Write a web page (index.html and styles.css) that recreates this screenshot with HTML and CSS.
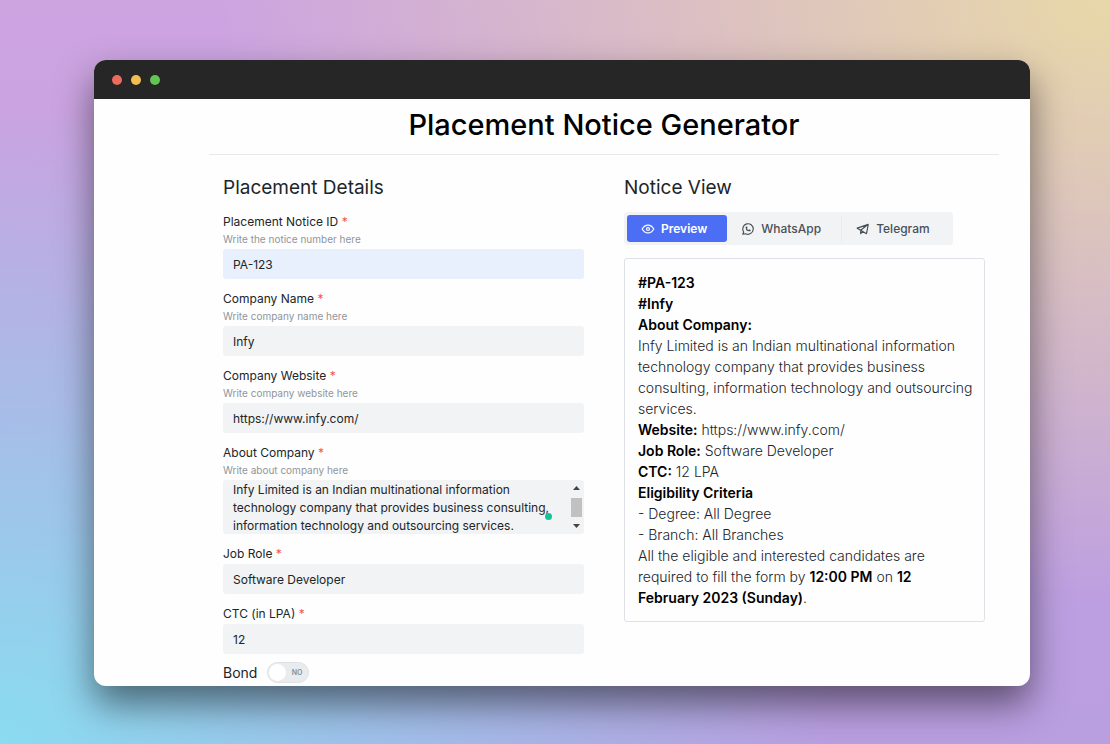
FILE: index.html
```html
<!DOCTYPE html>
<html lang="en">
<head>
<meta charset="utf-8">
<meta name="viewport" content="width=device-width, initial-scale=1">
<title>Placement Notice Generator</title>
<link rel="stylesheet" href="styles.css">
</head>
<body>
<div class="window">
  <div class="titlebar" aria-hidden="true">
    <span class="dot dot-close"></span>
    <span class="dot dot-minimize"></span>
    <span class="dot dot-zoom"></span>
  </div>
  <main class="page">
    <h1 class="page-title">Placement Notice Generator</h1>
    <div class="columns">
      <form class="details">
        <h2 class="section-title">Placement Details</h2>
        <div class="field">
          <label class="label" for="notice-id">Placement Notice ID <span class="required">*</span></label>
          <p class="hint">Write the notice number here</p>
          <input class="input input-filled" id="notice-id" type="text" value="PA-123">
        </div>
        <div class="field">
          <label class="label" for="company-name">Company Name <span class="required">*</span></label>
          <p class="hint">Write company name here</p>
          <input class="input" id="company-name" type="text" value="Infy">
        </div>
        <div class="field">
          <label class="label" for="website">Company Website <span class="required">*</span></label>
          <p class="hint">Write company website here</p>
          <input class="input" id="website" type="text" value="https://www.infy.com/">
        </div>
        <div class="field">
          <label class="label" for="about">About Company <span class="required">*</span></label>
          <p class="hint">Write about company here</p>
          <div class="textarea-wrap">
            <textarea class="input textarea" id="about">Infy Limited is an Indian multinational information technology company that provides business consulting, information technology and outsourcing services.</textarea>
            <span class="status-dot"></span>
            <div class="scrollbar" aria-hidden="true">
              <svg width="7" height="4" viewBox="0 0 7 4"><path d="M3.500 0L7 4H0z" fill="#444"/></svg>
              <span class="thumb"></span>
              <svg width="7" height="4" viewBox="0 0 7 4"><path d="M3.500 4L0 0h7z" fill="#444"/></svg>
            </div>
          </div>
        </div>
        <div class="field">
          <label class="label" for="role">Job Role <span class="required">*</span></label>
          <input class="input" id="role" type="text" value="Software Developer">
        </div>
        <div class="field">
          <label class="label" for="ctc">CTC (in LPA) <span class="required">*</span></label>
          <input class="input" id="ctc" type="text" value="12">
        </div>
        <div class="bond">
          <label for="bond">Bond</label>
          <span class="switch">
            <input class="switch-input" id="bond" type="checkbox" role="switch">
            <span class="switch-text">NO</span>
          </span>
        </div>
      </form>
      <section class="notice">
        <h2 class="section-title">Notice View</h2>
        <div class="tabs" role="tablist">
          <button class="tab tab-active" type="button" role="tab" aria-selected="true">
            <svg class="icon" viewBox="0 0 24 24"><path d="M2 12c5-9 15-9 20 0c-5 9-15 9-20 0z"/><circle cx="12" cy="12" r="2.500"/></svg>
            Preview
          </button>
          <button class="tab" type="button" role="tab" aria-selected="false">
            <svg class="icon" viewBox="0 0 24 24"><path d="M3 21l1.650-3.800a9 9 0 1 1 3.400 2.900z"/><path d="M9 10a.5.5 0 0 0 1 0V9a.5.5 0 0 0-1 0v1a5 5 0 0 0 5 5h1a.5.5 0 0 0 0-1h-1a.5.5 0 0 0 0 1"/></svg>
            WhatsApp
          </button>
          <button class="tab" type="button" role="tab" aria-selected="false">
            <svg class="icon" viewBox="0 0 24 24"><path d="M21 4L2 10.500l6 3.500M21 4l-3 16-10-6M21 4L8 14v6l4-4"/></svg>
            Telegram
          </button>
        </div>
        <article class="card">
          <strong>#PA-123</strong><br>
          <strong>#Infy</strong><br>
          <strong>About Company:</strong><br>
          Infy Limited is an Indian multinational information technology company that provides business consulting, information technology and outsourcing services.<br>
          <strong>Website:</strong> https://www.infy.com/<br>
          <strong>Job Role:</strong> Software Developer<br>
          <strong>CTC:</strong> 12 LPA<br>
          <strong>Eligibility Criteria</strong><br>
          - Degree: All Degree<br>
          - Branch: All Branches<br>
          All the eligible and interested candidates are required to fill the form by <strong>12:00 PM</strong> on <strong>12 February 2023 (Sunday)</strong>.
        </article>
      </section>
    </div>
  </main>
</div>
</body>
</html>
```
FILE: styles.css
```css
* {
  box-sizing: border-box;
}

body {
  display: flex;
  min-height: 100vh;
  margin: 0;
  padding: 60px 80px 58px 94px;
  font-family: Inter, "Liberation Sans", sans-serif;
  color: #212529;
  background:
    radial-gradient(ellipse 75% 85% at 0 100%, #8adcf0 0, #8adcf000 100%),
    radial-gradient(ellipse 80% 80% at 100% 0, #e8d8a8 0, #e8d8a800 100%),
    linear-gradient(#cda4e0, #b99ee0);
}

.window {
  display: flex;
  flex: 1;
  flex-direction: column;
  min-width: 0;
  overflow: hidden;
  background: #fefefe;
  border-radius: 12px;
  box-shadow: 0 18px 36px rgb(0 0 0 / 50%);
}

.titlebar {
  display: flex;
  gap: 9px;
  align-items: center;
  height: 39px;
  padding-left: 18px;
  background: #262626;
}

.dot {
  width: 10px;
  height: 10px;
  border-radius: 50%;
}

.dot-close {
  background: #ed6a5e;
}

.dot-minimize {
  background: #f5bd4f;
}

.dot-zoom {
  background: #61c454;
}

.page {
  flex: 1;
  padding: 0 31px 0 115px;
}

.page-title {
  margin: 0;
  padding: 5px 0 9px;
  border-bottom: 1px solid #e6e8ea;
  font-size: 29px;
  font-weight: 500;
  line-height: 41px;
  text-align: center;
  color: #000;
}

.columns {
  display: grid;
  grid-template-columns: 1fr 1fr;
  gap: 40px;
  padding: 19px 14px 0;
}

.section-title {
  margin: 0 0 10px;
  font-size: 19px;
  font-weight: 400;
  line-height: 28px;
}

.field {
  margin-bottom: 10px;
}

.label {
  display: block;
  font-size: 12px;
  line-height: 20px;
}

.required {
  color: #fa5252;
}

.hint {
  margin: 0 0 3px;
  font-size: 10px;
  line-height: 14px;
  color: #909599;
}

.input {
  display: block;
  width: 100%;
  height: 30px;
  margin: 0;
  padding: 0 10px;
  border: 0;
  border-radius: 3px;
  outline: 0;
  background: #f1f3f4;
  color: #212529;
  font-family: inherit;
  font-size: 12px;
}

.input-filled {
  background: #e8f0fe;
}

.textarea-wrap {
  position: relative;
}

.textarea {
  height: 54px;
  padding: 1px 30px 0 10px;
  overflow: hidden;
  line-height: 18px;
  resize: none;
}

.status-dot {
  position: absolute;
  right: 32px;
  bottom: 14px;
  width: 7px;
  height: 7px;
  border-radius: 50%;
  background: #15c39a;
}

.scrollbar {
  position: absolute;
  top: 0;
  right: 1px;
  bottom: 0;
  display: flex;
  flex-direction: column;
  align-items: center;
  justify-content: space-between;
  width: 13px;
  padding: 6px 0;
}

.thumb {
  width: 11px;
  height: 19px;
  background: #c1c1c1;
}

.bond {
  display: flex;
  gap: 10px;
  align-items: center;
  margin-top: -2px;
  font-size: 14px;
}

.switch {
  position: relative;
  display: flex;
}

.switch-input {
  display: flex;
  align-items: center;
  width: 42px;
  height: 21px;
  margin: 0;
  padding: 1px;
  border: 1px solid #dee2e6;
  border-radius: 11px;
  appearance: none;
  background: #e9ecef;
}

.switch-input::before {
  width: 17px;
  height: 17px;
  border-radius: 50%;
  background: #fff;
  content: "";
}

.switch-text {
  position: absolute;
  top: 6px;
  right: 7px;
  font-size: 7px;
  font-weight: 600;
  line-height: 9px;
  color: #868e96;
  pointer-events: none;
}

.tabs {
  display: inline-flex;
  margin-bottom: 13px;
  padding: 3px;
  border-radius: 4px;
  background: #f1f3f5;
}

.tab {
  display: flex;
  gap: 6px;
  align-items: center;
  height: 27px;
  padding: 0 20px 0 14px;
  border: 0;
  border-radius: 3px;
  background: none;
  color: #495057;
  font-family: inherit;
  font-size: 12px;
  font-weight: 500;
}

.tab:last-child {
  border-left: 1px solid #e9ecef;
  border-radius: 0;
}

.tab-active {
  background: #4c6ef5;
  color: #fff;
  font-weight: 600;
}

.icon {
  width: 14px;
  height: 14px;
  fill: none;
  stroke: currentColor;
  stroke-linecap: round;
  stroke-linejoin: round;
  stroke-width: 2;
}

.card {
  padding: 13px 8px 13px 13px;
  border: 1px solid #dee2e6;
  border-radius: 3px;
  font-size: 14px;
  font-weight: 300;
  line-height: 21px;
}

.card strong {
  font-weight: 600;
  color: #000;
}
```
